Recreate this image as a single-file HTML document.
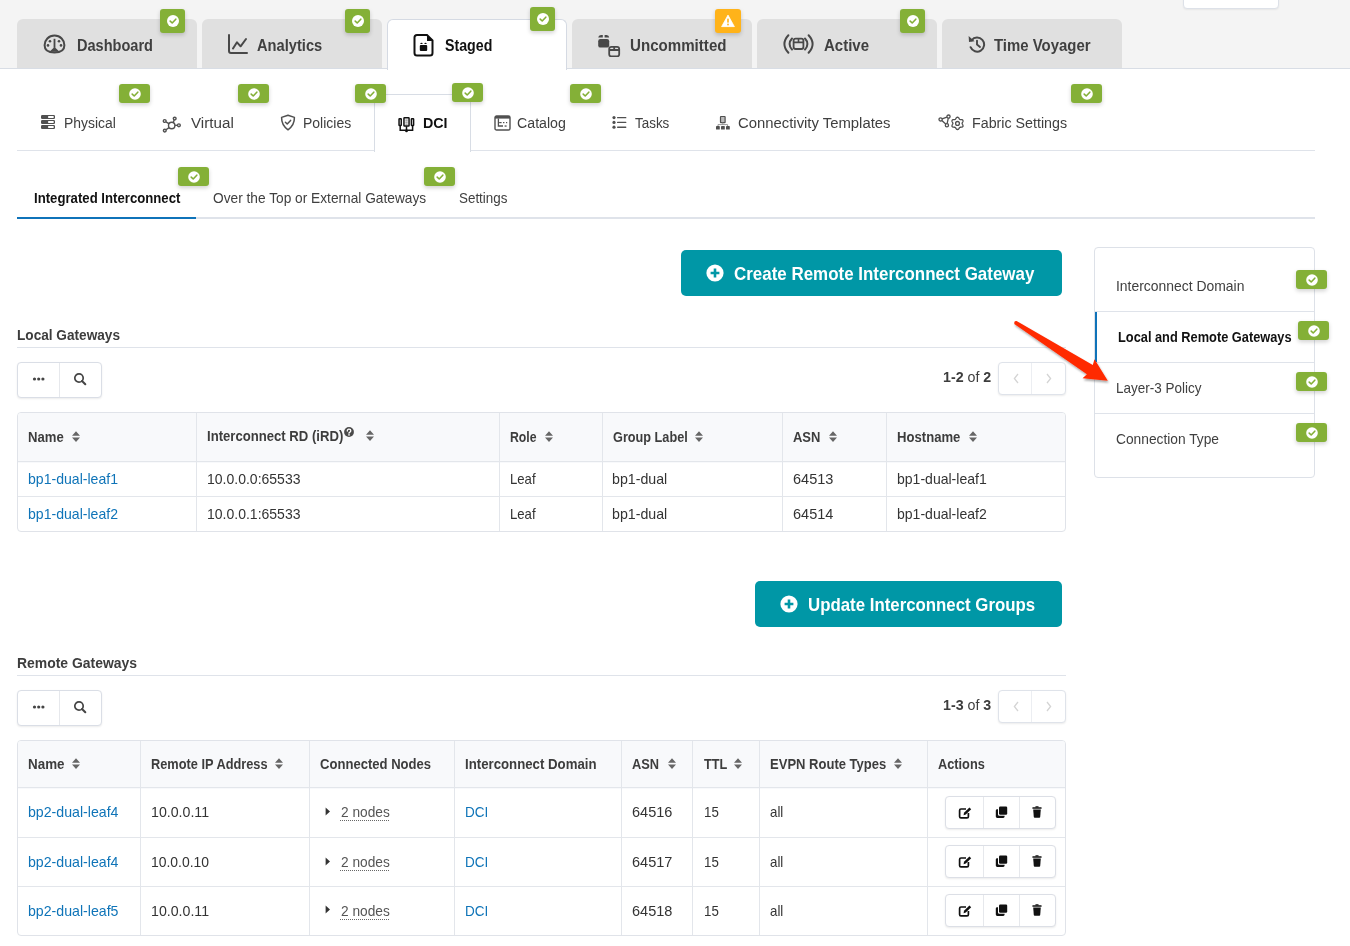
<!DOCTYPE html>
<html><head><meta charset="utf-8">
<style>
*{box-sizing:border-box;margin:0;padding:0}
html,body{width:1350px;height:946px;overflow:hidden;background:#fff;font-family:"Liberation Sans",sans-serif;position:relative}
.a{position:absolute}
.t{position:absolute;white-space:nowrap;transform-origin:0 0}
.tab{position:absolute;top:19px;width:180px;height:49px;background:#e0e0e0;border-radius:6px 6px 0 0}
.badge{position:absolute;background:#84b037;border-radius:3px;box-shadow:0 2px 4px rgba(0,0,0,.18)}
.badge svg{position:absolute;left:50%;top:50%;transform:translate(-50%,-50%)}
.ln{position:absolute;background:#dfe3ea}
.vl{position:absolute;background:#e3e6eb;width:1px}
.hl{position:absolute;background:#e3e6eb;height:1px}
.btngrp{position:absolute;border:1px solid #dadee6;border-radius:4px;background:#fff;box-shadow:0 1px 2px rgba(0,0,0,.08)}
.tbl{position:absolute;border:1px solid #e0e3e9;border-radius:4px;background:#fff;overflow:hidden}
.thead{position:absolute;left:0;top:0;right:0;background:#f8f9fb}
.teal{position:absolute;background:#0097a6;border-radius:5px}
</style></head><body>
<div class="a" style="left:0;top:0;width:1350px;height:68px;background:#f4f4f4"></div>
<div class="ln" style="left:0;top:68px;width:1350px;height:1px;background:#d8dde5"></div>
<div class="a" style="left:1183px;top:-6px;width:96px;height:15px;background:#fff;border:1px solid #dde1e8;border-radius:0 0 4px 4px;box-shadow:0 1px 2px rgba(0,0,0,.06)"></div>
<div class="tab" style="left:17px"></div>
<div class="tab" style="left:202px"></div>
<div class="tab" style="left:387px;background:#fff;border:1px solid #d5dae3;border-bottom:none;height:51px"></div>
<div class="tab" style="left:572px"></div>
<div class="tab" style="left:757px"></div>
<div class="tab" style="left:942px"></div>
<div class="badge" style="left:160px;top:9px;width:25px;height:24px"><svg width="14" height="14" viewBox="0 0 14 14"><circle cx="7" cy="7" r="6" fill="#fff"/><path d="M4.2 7.1 L6.2 9 L9.8 5.2" stroke="#84b037" stroke-width="1.6" fill="none" stroke-linecap="round" stroke-linejoin="round"/></svg></div>
<div class="badge" style="left:345px;top:9px;width:25px;height:24px"><svg width="14" height="14" viewBox="0 0 14 14"><circle cx="7" cy="7" r="6" fill="#fff"/><path d="M4.2 7.1 L6.2 9 L9.8 5.2" stroke="#84b037" stroke-width="1.6" fill="none" stroke-linecap="round" stroke-linejoin="round"/></svg></div>
<div class="badge" style="left:900px;top:9px;width:25px;height:24px"><svg width="14" height="14" viewBox="0 0 14 14"><circle cx="7" cy="7" r="6" fill="#fff"/><path d="M4.2 7.1 L6.2 9 L9.8 5.2" stroke="#84b037" stroke-width="1.6" fill="none" stroke-linecap="round" stroke-linejoin="round"/></svg></div>
<div class="badge" style="left:530px;top:7px;width:25px;height:24px"><svg width="14" height="14" viewBox="0 0 14 14"><circle cx="7" cy="7" r="6" fill="#fff"/><path d="M4.2 7.1 L6.2 9 L9.8 5.2" stroke="#84b037" stroke-width="1.6" fill="none" stroke-linecap="round" stroke-linejoin="round"/></svg></div>
<div class="badge" style="left:715px;top:9px;width:26px;height:24px;background:#ffb31a"><svg width="14" height="13" viewBox="0 0 14 13"><path d="M7 0.6 L13.4 12.2 L0.6 12.2 Z" fill="#fff" stroke="#fff" stroke-width="0.8" stroke-linejoin="round"/><rect x="6.2" y="4" width="1.6" height="4.2" rx=".6" fill="#ffb31a"/><circle cx="7" cy="10" r=".9" fill="#ffb31a"/></svg></div>
<svg class="a" style="left:43px;top:34px" width="23" height="20" viewBox="0 0 23 20">
<path d="M11.5 1.6 C5.6 1.6 1.6 6 1.6 11.2 C1.6 15.6 5 18.4 11.5 18.4 C18 18.4 21.4 15.6 21.4 11.2 C21.4 6 17.4 1.6 11.5 1.6 Z" fill="none" stroke="#484848" stroke-width="2"/>
<rect x="10.6" y="4.8" width="1.8" height="9" fill="#484848"/><path d="M6.5 17.8 L11.5 13 L16.5 17.8 Z" fill="#484848"/>
<circle cx="7" cy="7.3" r="1.3" fill="#484848"/><circle cx="16" cy="7.3" r="1.3" fill="#484848"/><circle cx="5" cy="11.4" r="1.3" fill="#484848"/><circle cx="18" cy="11.4" r="1.3" fill="#484848"/></svg>
<svg class="a" style="left:227px;top:33px" width="22" height="22" viewBox="0 0 22 22">
<path d="M2 2 V18 Q2 20 4 20 H20" fill="none" stroke="#484848" stroke-width="2" stroke-linecap="round"/>
<path d="M6 15.5 L10 9.3 L13.6 13.3 L19 6" fill="none" stroke="#484848" stroke-width="2" stroke-linecap="round" stroke-linejoin="round"/></svg>
<svg class="a" style="left:413px;top:33px" width="22" height="24" viewBox="0 0 22 24">
<path d="M4 2 H14 L19.5 7.5 V20 Q19.5 22.5 17 22.5 H4 Q1.5 22.5 1.5 20 V4.5 Q1.5 2 4 2 Z" fill="none" stroke="#111" stroke-width="2"/>
<path d="M14 2 V8 H19.5 Z" fill="#111"/>
<rect x="6.8" y="12" width="7.4" height="6" rx="1" fill="#111"/><path d="M7.2 11 Q7.8 9 9.5 10 V11 Z M13.8 11 Q13.2 9 11.5 10 V11 Z" fill="#111"/></svg>
<svg class="a" style="left:597px;top:33px" width="24" height="24" viewBox="0 0 24 24">
<rect x="1.2" y="6" width="11" height="8.6" rx="2.2" fill="#484848"/><path d="M1.2 4.6 Q1.5 2 4 2 H5.8 V4.6 Z M7.6 2 H9.6 Q12 2 12.2 4.6 H7.6 Z" fill="#484848"/>
<rect x="12.2" y="13.8" width="10" height="9.6" rx="2.2" fill="none" stroke="#484848" stroke-width="1.8"/><path d="M12.4 17 H22 M17.2 13.8 V17" stroke="#484848" stroke-width="1.8"/></svg>
<svg class="a" style="left:783px;top:33px" width="31" height="22" viewBox="0 0 31 22">
<path d="M5.4 2.2 Q1.4 6.5 1.4 11 Q1.4 15.5 5.4 19.8" fill="none" stroke="#484848" stroke-width="2" stroke-linecap="round"/>
<path d="M9 5.5 Q6.6 8 6.6 11 Q6.6 14 9 16.5" fill="none" stroke="#484848" stroke-width="2" stroke-linecap="round"/>
<path d="M25.6 2.2 Q29.6 6.5 29.6 11 Q29.6 15.5 25.6 19.8" fill="none" stroke="#484848" stroke-width="2" stroke-linecap="round"/>
<path d="M22 5.5 Q24.4 8 24.4 11 Q24.4 14 22 16.5" fill="none" stroke="#484848" stroke-width="2" stroke-linecap="round"/>
<rect x="10.6" y="5.6" width="9.8" height="10.4" rx="2" fill="none" stroke="#484848" stroke-width="1.8"/><path d="M10.8 9.4 H20.2 M15.5 5.8 V9.4" stroke="#484848" stroke-width="1.6"/></svg>
<svg class="a" style="left:966px;top:33px" width="20" height="20" viewBox="0 0 20 20">
<path d="M5.6 7.3 A7 7 0 1 1 4.6 14.2" fill="none" stroke="#484848" stroke-width="2" stroke-linecap="round"/>
<path d="M2.6 3 L3 9 L8.6 8.2 Z" fill="#484848"/><path d="M11 7.6 V11.6 L14 14" fill="none" stroke="#484848" stroke-width="1.9" stroke-linecap="round" stroke-linejoin="round"/></svg>
<div class="ln" style="left:17px;top:150px;width:1298px;height:1px"></div>
<div class="a" style="left:374px;top:94px;width:97px;height:58px;background:#fff;border:1px solid #d8dde5;border-bottom:none"></div>
<div class="badge" style="left:119px;top:84px;width:31px;height:19px"><svg width="14" height="14" viewBox="0 0 14 14"><circle cx="7" cy="7" r="5.8" fill="#fff"/><path d="M4.2 7.1 L6.2 9 L9.8 5.2" stroke="#84b037" stroke-width="1.6" fill="none" stroke-linecap="round" stroke-linejoin="round"/></svg></div>
<div class="badge" style="left:238px;top:84px;width:31px;height:19px"><svg width="14" height="14" viewBox="0 0 14 14"><circle cx="7" cy="7" r="5.8" fill="#fff"/><path d="M4.2 7.1 L6.2 9 L9.8 5.2" stroke="#84b037" stroke-width="1.6" fill="none" stroke-linecap="round" stroke-linejoin="round"/></svg></div>
<div class="badge" style="left:355px;top:84px;width:31px;height:19px"><svg width="14" height="14" viewBox="0 0 14 14"><circle cx="7" cy="7" r="5.8" fill="#fff"/><path d="M4.2 7.1 L6.2 9 L9.8 5.2" stroke="#84b037" stroke-width="1.6" fill="none" stroke-linecap="round" stroke-linejoin="round"/></svg></div>
<div class="badge" style="left:570px;top:84px;width:31px;height:19px"><svg width="14" height="14" viewBox="0 0 14 14"><circle cx="7" cy="7" r="5.8" fill="#fff"/><path d="M4.2 7.1 L6.2 9 L9.8 5.2" stroke="#84b037" stroke-width="1.6" fill="none" stroke-linecap="round" stroke-linejoin="round"/></svg></div>
<div class="badge" style="left:1071px;top:84px;width:31px;height:19px"><svg width="14" height="14" viewBox="0 0 14 14"><circle cx="7" cy="7" r="5.8" fill="#fff"/><path d="M4.2 7.1 L6.2 9 L9.8 5.2" stroke="#84b037" stroke-width="1.6" fill="none" stroke-linecap="round" stroke-linejoin="round"/></svg></div>
<div class="badge" style="left:452px;top:83px;width:31px;height:19px"><svg width="14" height="14" viewBox="0 0 14 14"><circle cx="7" cy="7" r="5.8" fill="#fff"/><path d="M4.2 7.1 L6.2 9 L9.8 5.2" stroke="#84b037" stroke-width="1.6" fill="none" stroke-linecap="round" stroke-linejoin="round"/></svg></div>
<svg class="a" style="left:40px;top:114px" width="16" height="16" viewBox="0 0 16 16">
<g fill="#505050"><rect x="1" y="1" width="14" height="4" rx="1.2"/><rect x="1" y="6" width="14" height="4" rx="1.2"/><rect x="1" y="11" width="14" height="4" rx="1.2"/></g>
<g fill="#fff"><rect x="8" y="2" width="5.8" height="2" rx=".8"/><rect x="8" y="7" width="5.8" height="2" rx=".8"/><rect x="8" y="12" width="5.8" height="2" rx=".8"/></g></svg>
<svg class="a" style="left:162px;top:116px" width="20" height="17" viewBox="0 0 20 17">
<g fill="none" stroke="#505050" stroke-width="1.4"><circle cx="9.7" cy="9.5" r="3.2"/><circle cx="2.7" cy="5" r="1.4"/><circle cx="12.7" cy="2.6" r="1.4"/><circle cx="16.9" cy="9.3" r="1.4"/><circle cx="2.8" cy="14.6" r="1.4"/>
<path d="M4 5.8 L7.2 7.8 M12.2 3.9 L11.2 6.5 M15.5 9.3 L12.9 9.4 M4 13.8 L7 11.6"/></g></svg>
<svg class="a" style="left:280px;top:114px" width="16" height="17" viewBox="0 0 16 17">
<path d="M8 1.2 L14.4 3.4 Q14.6 10.8 8 15.8 Q1.4 10.8 1.6 3.4 Z" fill="none" stroke="#505050" stroke-width="1.5" stroke-linejoin="round"/>
<path d="M5.4 8.3 L7.2 10 L10.6 6.4" fill="none" stroke="#505050" stroke-width="1.5" stroke-linecap="round" stroke-linejoin="round"/></svg>
<svg class="a" style="left:397px;top:115px" width="19" height="18" viewBox="0 0 19 18">
<g fill="none" stroke="#111" stroke-width="1.5"><rect x="2.05" y="3.8" width="2.2" height="6.6" rx=".5"/><rect x="14.4" y="3.8" width="2.2" height="6.6" rx=".5"/><rect x="6.95" y="2.75" width="5.1" height="8.3" rx=".6"/>
<path d="M3.2 10.6 V15.3 H15.6 V10.6 M9.5 11.2 V15"/></g><circle cx="9.5" cy="15.9" r="1.4" fill="#111"/>
<g fill="#777"><rect x="8.3" y="4.6" width="2.4" height="1"/><rect x="8.3" y="6.6" width="2.4" height="1"/><rect x="8.3" y="8.6" width="2.4" height="1"/></g></svg>
<svg class="a" style="left:494px;top:115px" width="17" height="16" viewBox="0 0 17 16">
<rect x="1" y="1" width="15" height="14" rx="1.6" fill="none" stroke="#505050" stroke-width="1.4"/><rect x="1" y="1" width="15" height="2.6" fill="#505050"/>
<path d="M4.4 3.4 V11 H9" fill="none" stroke="#505050" stroke-width="1.3"/><g fill="#505050"><rect x="5.2" y="7" width="2.4" height="1.2"/><rect x="9" y="7" width="1.4" height="1.2"/><rect x="12" y="7" width="1.2" height="1.2"/><rect x="10.6" y="10.4" width="2" height="1.3"/></g></svg>
<svg class="a" style="left:612px;top:115px" width="15" height="15" viewBox="0 0 15 15">
<g fill="#505050"><circle cx="2" cy="2.6" r="1.6"/><circle cx="2" cy="7.4" r="1.6"/><circle cx="2" cy="12.2" r="1.6"/><rect x="5" y="2" width="9.4" height="1.3" rx=".6"/><rect x="5" y="6.8" width="9.4" height="1.3" rx=".6"/><rect x="5" y="11.6" width="9.4" height="1.3" rx=".6"/></g></svg>
<svg class="a" style="left:715px;top:115px" width="16" height="16" viewBox="0 0 16 16">
<rect x="5.5" y="1.5" width="4.6" height="6.1" rx=".4" fill="#bbb" stroke="#505050" stroke-width="1.2"/><path d="M7.8 7.6 V10 M3 11.2 V9.6 H12.6 V11.2" fill="none" stroke="#999" stroke-width="1"/>
<g fill="#505050"><rect x="1" y="11" width="3.8" height="3.6" rx=".4"/><rect x="6" y="11" width="3.8" height="3.6" rx=".4"/><rect x="11" y="11" width="3.8" height="3.6" rx=".4"/></g></svg>
<svg class="a" style="left:938px;top:114px" width="26" height="18" viewBox="0 0 26 18">
<g fill="none" stroke="#505050" stroke-width="1.3"><circle cx="2.6" cy="5.4" r="1.6"/><circle cx="10.5" cy="2.6" r="1.6"/><circle cx="8.9" cy="11.2" r="1.6"/><path d="M4.1 4.9 L8.9 3.2 M10.3 4.2 L9.1 9.6 M3.8 6.5 L7.7 10.1"/>
<path d="M19.50 3.20 L20.03 3.33 L20.51 3.69 L20.90 4.18 L21.21 4.70 L21.49 5.13 L21.80 5.42 L22.20 5.54 L22.71 5.57 L23.32 5.58 L23.94 5.67 L24.49 5.91 L24.87 6.30 L25.02 6.83 L24.95 7.42 L24.72 8.00 L24.42 8.53 L24.19 8.99 L24.10 9.40 L24.19 9.81 L24.42 10.27 L24.72 10.80 L24.95 11.38 L25.02 11.97 L24.87 12.50 L24.49 12.89 L23.94 13.13 L23.32 13.22 L22.71 13.23 L22.20 13.26 L21.80 13.38 L21.49 13.67 L21.21 14.10 L20.90 14.62 L20.51 15.11 L20.03 15.47 L19.50 15.60 L18.97 15.47 L18.49 15.11 L18.10 14.62 L17.79 14.10 L17.51 13.67 L17.20 13.38 L16.80 13.26 L16.29 13.23 L15.68 13.22 L15.06 13.13 L14.51 12.89 L14.13 12.50 L13.98 11.97 L14.05 11.38 L14.28 10.80 L14.58 10.27 L14.81 9.81 L14.90 9.40 L14.81 8.99 L14.58 8.53 L14.28 8.00 L14.05 7.42 L13.98 6.83 L14.13 6.30 L14.51 5.91 L15.06 5.67 L15.68 5.58 L16.29 5.57 L16.80 5.54 L17.20 5.42 L17.51 5.13 L17.79 4.70 L18.10 4.18 L18.49 3.69 L18.97 3.33 L19.50 3.20 Z" stroke-linejoin="round"/><circle cx="19.5" cy="9.4" r="1.9"/></g></svg>
<div class="ln" style="left:17px;top:217px;width:1298px;height:2px"></div>
<div class="a" style="left:17px;top:217px;width:179px;height:2px;background:#0f73b9"></div>
<div class="badge" style="left:178px;top:167px;width:31px;height:19px"><svg width="14" height="14" viewBox="0 0 14 14"><circle cx="7" cy="7" r="5.8" fill="#fff"/><path d="M4.2 7.1 L6.2 9 L9.8 5.2" stroke="#84b037" stroke-width="1.6" fill="none" stroke-linecap="round" stroke-linejoin="round"/></svg></div>
<div class="badge" style="left:424px;top:167px;width:31px;height:19px"><svg width="14" height="14" viewBox="0 0 14 14"><circle cx="7" cy="7" r="5.8" fill="#fff"/><path d="M4.2 7.1 L6.2 9 L9.8 5.2" stroke="#84b037" stroke-width="1.6" fill="none" stroke-linecap="round" stroke-linejoin="round"/></svg></div>
<div class="teal" style="left:681px;top:250px;width:381px;height:46px"></div>
<svg class="a" style="left:706px;top:264px" width="18" height="18" viewBox="0 0 18 18"><circle cx="9" cy="9" r="8.6" fill="#fff"/><path d="M9 4.6 V13.4 M4.6 9 H13.4" stroke="#0097a6" stroke-width="2.6"/></svg>
<div class="teal" style="left:755px;top:581px;width:307px;height:46px"></div>
<svg class="a" style="left:780px;top:595px" width="18" height="18" viewBox="0 0 18 18"><circle cx="9" cy="9" r="8.6" fill="#fff"/><path d="M9 4.6 V13.4 M4.6 9 H13.4" stroke="#0097a6" stroke-width="2.6"/></svg>
<div class="a" style="left:1094px;top:247px;width:221px;height:231px;border:1px solid #dde1e8;border-radius:4px;background:#fff"></div>
<div class="ln" style="left:1095px;top:311px;width:219px;height:1px"></div>
<div class="ln" style="left:1095px;top:362px;width:219px;height:1px"></div>
<div class="ln" style="left:1095px;top:413px;width:219px;height:1px"></div>
<div class="a" style="left:1095px;top:312px;width:2px;height:50px;background:#0f73b9"></div>
<div class="badge" style="left:1296px;top:270px;width:31px;height:19px"><svg width="14" height="14" viewBox="0 0 14 14"><circle cx="7" cy="7" r="5.8" fill="#fff"/><path d="M4.2 7.1 L6.2 9 L9.8 5.2" stroke="#84b037" stroke-width="1.6" fill="none" stroke-linecap="round" stroke-linejoin="round"/></svg></div>
<div class="badge" style="left:1298px;top:321px;width:31px;height:19px"><svg width="14" height="14" viewBox="0 0 14 14"><circle cx="7" cy="7" r="5.8" fill="#fff"/><path d="M4.2 7.1 L6.2 9 L9.8 5.2" stroke="#84b037" stroke-width="1.6" fill="none" stroke-linecap="round" stroke-linejoin="round"/></svg></div>
<div class="badge" style="left:1296px;top:372px;width:31px;height:19px"><svg width="14" height="14" viewBox="0 0 14 14"><circle cx="7" cy="7" r="5.8" fill="#fff"/><path d="M4.2 7.1 L6.2 9 L9.8 5.2" stroke="#84b037" stroke-width="1.6" fill="none" stroke-linecap="round" stroke-linejoin="round"/></svg></div>
<div class="badge" style="left:1296px;top:423px;width:31px;height:19px"><svg width="14" height="14" viewBox="0 0 14 14"><circle cx="7" cy="7" r="5.8" fill="#fff"/><path d="M4.2 7.1 L6.2 9 L9.8 5.2" stroke="#84b037" stroke-width="1.6" fill="none" stroke-linecap="round" stroke-linejoin="round"/></svg></div>
<div class="ln" style="left:17px;top:347px;width:1049px;height:1px"></div>
<div class="btngrp" style="left:17px;top:362px;width:85px;height:36px"></div>
<div class="a" style="left:59px;top:363px;width:1px;height:34px;background:#e6e8ec"></div>
<svg class="a" style="left:32px;top:376px" width="14" height="6" viewBox="0 0 14 6"><g fill="#444"><circle cx="2.5" cy="3" r="1.6"/><circle cx="6.7" cy="3" r="1.6"/><circle cx="10.9" cy="3" r="1.6"/></g></svg>
<svg class="a" style="left:73px;top:372px" width="14" height="14" viewBox="0 0 14 14"><circle cx="6" cy="6" r="4.2" fill="none" stroke="#444" stroke-width="1.7"/><path d="M9 9 L12.3 12.3" stroke="#444" stroke-width="2" stroke-linecap="round"/></svg>
<div class="btngrp" style="left:998px;top:362px;width:68px;height:33px;border-color:#dfe3ea"></div>
<div class="a" style="left:1031px;top:363px;width:1px;height:31px;background:#eceef2"></div>
<svg class="a" style="left:1012px;top:373px" width="8" height="11" viewBox="0 0 8 11"><path d="M6 1 L2.4 5.5 L6 10" fill="none" stroke="#d4d4d4" stroke-width="1.3"/></svg>
<svg class="a" style="left:1045px;top:373px" width="8" height="11" viewBox="0 0 8 11"><path d="M2 1 L5.6 5.5 L2 10" fill="none" stroke="#d4d4d4" stroke-width="1.3"/></svg>
<div class="ln" style="left:17px;top:675px;width:1049px;height:1px"></div>
<div class="btngrp" style="left:17px;top:690px;width:85px;height:36px"></div>
<div class="a" style="left:59px;top:691px;width:1px;height:34px;background:#e6e8ec"></div>
<svg class="a" style="left:32px;top:704px" width="14" height="6" viewBox="0 0 14 6"><g fill="#444"><circle cx="2.5" cy="3" r="1.6"/><circle cx="6.7" cy="3" r="1.6"/><circle cx="10.9" cy="3" r="1.6"/></g></svg>
<svg class="a" style="left:73px;top:700px" width="14" height="14" viewBox="0 0 14 14"><circle cx="6" cy="6" r="4.2" fill="none" stroke="#444" stroke-width="1.7"/><path d="M9 9 L12.3 12.3" stroke="#444" stroke-width="2" stroke-linecap="round"/></svg>
<div class="btngrp" style="left:998px;top:690px;width:68px;height:33px;border-color:#dfe3ea"></div>
<div class="a" style="left:1031px;top:691px;width:1px;height:31px;background:#eceef2"></div>
<svg class="a" style="left:1012px;top:701px" width="8" height="11" viewBox="0 0 8 11"><path d="M6 1 L2.4 5.5 L6 10" fill="none" stroke="#d4d4d4" stroke-width="1.3"/></svg>
<svg class="a" style="left:1045px;top:701px" width="8" height="11" viewBox="0 0 8 11"><path d="M2 1 L5.6 5.5 L2 10" fill="none" stroke="#d4d4d4" stroke-width="1.3"/></svg>
<div class="tbl" style="left:17px;top:412px;width:1049px;height:120px"><div class="thead" style="height:50px"></div></div>
<div class="hl" style="left:18px;top:461px;width:1047px"></div>
<div class="hl" style="left:18px;top:496px;width:1047px"></div>
<div class="vl" style="left:196px;top:413px;height:118px"></div>
<div class="vl" style="left:499px;top:413px;height:118px"></div>
<div class="vl" style="left:602px;top:413px;height:118px"></div>
<div class="vl" style="left:782px;top:413px;height:118px"></div>
<div class="vl" style="left:886px;top:413px;height:118px"></div>
<svg class="a" style="left:72px;top:431px" width="8" height="11" viewBox="0 0 8 11"><path d="M4 0.2 L8 4.8 H0 Z M0 6.4 H8 L4 11 Z" fill="#666"/></svg>
<svg class="a" style="left:545px;top:431px" width="8" height="11" viewBox="0 0 8 11"><path d="M4 0.2 L8 4.8 H0 Z M0 6.4 H8 L4 11 Z" fill="#666"/></svg>
<svg class="a" style="left:695px;top:431px" width="8" height="11" viewBox="0 0 8 11"><path d="M4 0.2 L8 4.8 H0 Z M0 6.4 H8 L4 11 Z" fill="#666"/></svg>
<svg class="a" style="left:829px;top:431px" width="8" height="11" viewBox="0 0 8 11"><path d="M4 0.2 L8 4.8 H0 Z M0 6.4 H8 L4 11 Z" fill="#666"/></svg>
<svg class="a" style="left:969px;top:431px" width="8" height="11" viewBox="0 0 8 11"><path d="M4 0.2 L8 4.8 H0 Z M0 6.4 H8 L4 11 Z" fill="#666"/></svg>
<svg class="a" style="left:366px;top:430px" width="8" height="11" viewBox="0 0 8 11"><path d="M4 0.2 L8 4.8 H0 Z M0 6.4 H8 L4 11 Z" fill="#666"/></svg>
<svg class="a" style="left:344px;top:427px" width="10" height="10" viewBox="0 0 10 10"><circle cx="5" cy="5" r="4.9" fill="#4a4a4a"/><path d="M3.3 4 Q3.3 2.2 5 2.2 Q6.8 2.2 6.8 3.8 Q6.8 4.8 5.6 5.3 Q5 5.6 5 6.2" fill="none" stroke="#fff" stroke-width="1.3" stroke-linecap="round"/><circle cx="5" cy="7.9" r=".8" fill="#fff"/></svg>
<div class="tbl" style="left:17px;top:740px;width:1049px;height:196px"><div class="thead" style="height:48px"></div></div>
<div class="hl" style="left:18px;top:787px;width:1047px"></div>
<div class="hl" style="left:18px;top:837px;width:1047px"></div>
<div class="hl" style="left:18px;top:886px;width:1047px"></div>
<div class="vl" style="left:140px;top:741px;height:194px"></div>
<div class="vl" style="left:309px;top:741px;height:194px"></div>
<div class="vl" style="left:454px;top:741px;height:194px"></div>
<div class="vl" style="left:621px;top:741px;height:194px"></div>
<div class="vl" style="left:692px;top:741px;height:194px"></div>
<div class="vl" style="left:759px;top:741px;height:194px"></div>
<div class="vl" style="left:927px;top:741px;height:194px"></div>
<svg class="a" style="left:72px;top:758px" width="8" height="11" viewBox="0 0 8 11"><path d="M4 0.2 L8 4.8 H0 Z M0 6.4 H8 L4 11 Z" fill="#666"/></svg>
<svg class="a" style="left:275px;top:758px" width="8" height="11" viewBox="0 0 8 11"><path d="M4 0.2 L8 4.8 H0 Z M0 6.4 H8 L4 11 Z" fill="#666"/></svg>
<svg class="a" style="left:668px;top:758px" width="8" height="11" viewBox="0 0 8 11"><path d="M4 0.2 L8 4.8 H0 Z M0 6.4 H8 L4 11 Z" fill="#666"/></svg>
<svg class="a" style="left:734px;top:758px" width="8" height="11" viewBox="0 0 8 11"><path d="M4 0.2 L8 4.8 H0 Z M0 6.4 H8 L4 11 Z" fill="#666"/></svg>
<svg class="a" style="left:894px;top:758px" width="8" height="11" viewBox="0 0 8 11"><path d="M4 0.2 L8 4.8 H0 Z M0 6.4 H8 L4 11 Z" fill="#666"/></svg>
<div class="btngrp" style="left:945px;top:796px;width:111px;height:33px;border-color:#dcdfe6"></div>
<div class="a" style="left:983px;top:797px;width:1px;height:31px;background:#e6e8ec"></div>
<div class="a" style="left:1019px;top:797px;width:1px;height:31px;background:#e6e8ec"></div>
<svg class="a" style="left:958px;top:806px" width="14" height="13" viewBox="0 0 14 13"><path d="M8 3 H3 Q1.6 3 1.6 4.4 V10.4 Q1.6 11.8 3 11.8 H9 Q10.4 11.8 10.4 10.4 V7" fill="none" stroke="#111" stroke-width="1.7"/><path d="M5.6 9.2 L6 6.8 L11.4 1.4 L13.2 3.2 L7.8 8.6 Z" fill="#111"/></svg>
<svg class="a" style="left:995px;top:806px" width="13" height="13" viewBox="0 0 13 13"><rect x="4" y="0.6" width="8.2" height="8.2" rx="1.2" fill="#111"/><path d="M3 3.2 H2.2 Q0.8 3.2 0.8 4.6 V10.6 Q0.8 12 2.2 12 H8.2 Q9.6 12 9.6 10.6 V9.8 H4.4 Q3 9.8 3 8.4 Z" fill="#111"/></svg>
<svg class="a" style="left:1032px;top:806px" width="10" height="12" viewBox="0 0 10 12"><rect x="0.4" y="1.2" width="9.2" height="1.6" rx=".4" fill="#111"/><rect x="3.4" y="0.2" width="3.2" height="1.4" rx=".4" fill="#111"/><path d="M1.2 3.4 H8.8 L8.2 11 Q8.1 11.8 7.3 11.8 H2.7 Q1.9 11.8 1.8 11 Z" fill="#111"/></svg>
<div class="btngrp" style="left:945px;top:845px;width:111px;height:33px;border-color:#dcdfe6"></div>
<div class="a" style="left:983px;top:846px;width:1px;height:31px;background:#e6e8ec"></div>
<div class="a" style="left:1019px;top:846px;width:1px;height:31px;background:#e6e8ec"></div>
<svg class="a" style="left:958px;top:855px" width="14" height="13" viewBox="0 0 14 13"><path d="M8 3 H3 Q1.6 3 1.6 4.4 V10.4 Q1.6 11.8 3 11.8 H9 Q10.4 11.8 10.4 10.4 V7" fill="none" stroke="#111" stroke-width="1.7"/><path d="M5.6 9.2 L6 6.8 L11.4 1.4 L13.2 3.2 L7.8 8.6 Z" fill="#111"/></svg>
<svg class="a" style="left:995px;top:855px" width="13" height="13" viewBox="0 0 13 13"><rect x="4" y="0.6" width="8.2" height="8.2" rx="1.2" fill="#111"/><path d="M3 3.2 H2.2 Q0.8 3.2 0.8 4.6 V10.6 Q0.8 12 2.2 12 H8.2 Q9.6 12 9.6 10.6 V9.8 H4.4 Q3 9.8 3 8.4 Z" fill="#111"/></svg>
<svg class="a" style="left:1032px;top:855px" width="10" height="12" viewBox="0 0 10 12"><rect x="0.4" y="1.2" width="9.2" height="1.6" rx=".4" fill="#111"/><rect x="3.4" y="0.2" width="3.2" height="1.4" rx=".4" fill="#111"/><path d="M1.2 3.4 H8.8 L8.2 11 Q8.1 11.8 7.3 11.8 H2.7 Q1.9 11.8 1.8 11 Z" fill="#111"/></svg>
<div class="btngrp" style="left:945px;top:894px;width:111px;height:33px;border-color:#dcdfe6"></div>
<div class="a" style="left:983px;top:895px;width:1px;height:31px;background:#e6e8ec"></div>
<div class="a" style="left:1019px;top:895px;width:1px;height:31px;background:#e6e8ec"></div>
<svg class="a" style="left:958px;top:904px" width="14" height="13" viewBox="0 0 14 13"><path d="M8 3 H3 Q1.6 3 1.6 4.4 V10.4 Q1.6 11.8 3 11.8 H9 Q10.4 11.8 10.4 10.4 V7" fill="none" stroke="#111" stroke-width="1.7"/><path d="M5.6 9.2 L6 6.8 L11.4 1.4 L13.2 3.2 L7.8 8.6 Z" fill="#111"/></svg>
<svg class="a" style="left:995px;top:904px" width="13" height="13" viewBox="0 0 13 13"><rect x="4" y="0.6" width="8.2" height="8.2" rx="1.2" fill="#111"/><path d="M3 3.2 H2.2 Q0.8 3.2 0.8 4.6 V10.6 Q0.8 12 2.2 12 H8.2 Q9.6 12 9.6 10.6 V9.8 H4.4 Q3 9.8 3 8.4 Z" fill="#111"/></svg>
<svg class="a" style="left:1032px;top:904px" width="10" height="12" viewBox="0 0 10 12"><rect x="0.4" y="1.2" width="9.2" height="1.6" rx=".4" fill="#111"/><rect x="3.4" y="0.2" width="3.2" height="1.4" rx=".4" fill="#111"/><path d="M1.2 3.4 H8.8 L8.2 11 Q8.1 11.8 7.3 11.8 H2.7 Q1.9 11.8 1.8 11 Z" fill="#111"/></svg>
<svg class="a" style="left:325px;top:806.8px" width="6" height="9" viewBox="0 0 6 9"><path d="M0.6 0.4 L5 4.5 L0.6 8.6 Z" fill="#333"/></svg>
<div class="a" style="left:340px;top:820.3px;width:49px;height:0;border-top:1px dotted #666"></div>
<svg class="a" style="left:325px;top:856.6px" width="6" height="9" viewBox="0 0 6 9"><path d="M0.6 0.4 L5 4.5 L0.6 8.6 Z" fill="#333"/></svg>
<div class="a" style="left:340px;top:870.1px;width:49px;height:0;border-top:1px dotted #666"></div>
<svg class="a" style="left:325px;top:905.4px" width="6" height="9" viewBox="0 0 6 9"><path d="M0.6 0.4 L5 4.5 L0.6 8.6 Z" fill="#333"/></svg>
<div class="a" style="left:340px;top:918.9px;width:49px;height:0;border-top:1px dotted #666"></div>
<svg class="a" style="left:1000px;top:310px;overflow:visible" width="120" height="80" viewBox="0 0 120 80">
<defs><filter id="sh" x="-20%" y="-20%" width="140%" height="160%"><feGaussianBlur in="SourceAlpha" stdDeviation="1.2"/><feOffset dx="1" dy="2"/><feComponentTransfer><feFuncA type="linear" slope="0.35"/></feComponentTransfer><feMerge><feMergeNode/><feMergeNode in="SourceGraphic"/></feMerge></filter></defs>
<path filter="url(#sh)" d="M14.2 13 Q14.2 10.6 16.6 11.1 L92.8 55 L94.5 49.3 L107.8 70.7 L82.6 68.3 L86.9 64.3 L15.4 14.8 Q14.2 14.4 14.2 13 Z" fill="#ff2a00"/></svg>
<div class="t " style="left:76.6px;top:34.78px;font-size:16.5px;line-height:21px;font-weight:700;color:#404040;transform:scaleX(0.8818)">Dashboard</div>
<div class="t " style="left:257.4px;top:34.78px;font-size:16.5px;line-height:21px;font-weight:700;color:#404040;transform:scaleX(0.8886)">Analytics</div>
<div class="t " style="left:630.0px;top:34.78px;font-size:16.5px;line-height:21px;font-weight:700;color:#404040;transform:scaleX(0.9154)">Uncommitted</div>
<div class="t " style="left:823.7px;top:34.78px;font-size:16.5px;line-height:21px;font-weight:700;color:#404040;transform:scaleX(0.9085)">Active</div>
<div class="t " style="left:994.4px;top:34.78px;font-size:16.5px;line-height:21px;font-weight:700;color:#404040;transform:scaleX(0.9054)">Time Voyager</div>
<div class="t " style="left:445.0px;top:34.78px;font-size:16.5px;line-height:21px;font-weight:700;color:#111;transform:scaleX(0.8616)">Staged</div>
<div class="t " style="left:63.5px;top:112.63px;font-size:15.5px;line-height:20px;font-weight:400;color:#404040;transform:scaleX(0.8975)">Physical</div>
<div class="t " style="left:190.6px;top:112.63px;font-size:15.5px;line-height:20px;font-weight:400;color:#404040;transform:scaleX(0.9804)">Virtual</div>
<div class="t " style="left:302.8px;top:112.63px;font-size:15.5px;line-height:20px;font-weight:400;color:#404040;transform:scaleX(0.9023)">Policies</div>
<div class="t " style="left:516.8px;top:112.63px;font-size:15.5px;line-height:20px;font-weight:400;color:#404040;transform:scaleX(0.9151)">Catalog</div>
<div class="t " style="left:635.0px;top:112.63px;font-size:15.5px;line-height:20px;font-weight:400;color:#404040;transform:scaleX(0.8656)">Tasks</div>
<div class="t " style="left:738.0px;top:112.63px;font-size:15.5px;line-height:20px;font-weight:400;color:#404040;transform:scaleX(0.9585)">Connectivity Templates</div>
<div class="t " style="left:971.7px;top:112.63px;font-size:15.5px;line-height:20px;font-weight:400;color:#404040;transform:scaleX(0.9198)">Fabric Settings</div>
<div class="t " style="left:423.0px;top:112.63px;font-size:15.5px;line-height:20px;font-weight:700;color:#111;transform:scaleX(0.9212)">DCI</div>
<div class="t " style="left:33.6px;top:189.47px;font-size:14.5px;line-height:19px;font-weight:700;color:#111;transform:scaleX(0.9085)">Integrated Interconnect</div>
<div class="t " style="left:212.5px;top:189.47px;font-size:14.5px;line-height:19px;font-weight:400;color:#404040;transform:scaleX(0.9458)">Over the Top or External Gateways</div>
<div class="t " style="left:458.6px;top:189.47px;font-size:14.5px;line-height:19px;font-weight:400;color:#404040;transform:scaleX(0.9236)">Settings</div>
<div class="t " style="left:733.8px;top:261.71px;font-size:19px;line-height:24px;font-weight:700;color:#fff;transform:scaleX(0.8918)">Create Remote Interconnect Gateway</div>
<div class="t " style="left:807.5px;top:593.01px;font-size:19px;line-height:24px;font-weight:700;color:#fff;transform:scaleX(0.8857)">Update Interconnect Groups</div>
<div class="t " style="left:1116.0px;top:277.47px;font-size:14.5px;line-height:19px;font-weight:400;color:#404040;transform:scaleX(0.9597)">Interconnect Domain</div>
<div class="t " style="left:1118.0px;top:328.47px;font-size:14.5px;line-height:19px;font-weight:700;color:#111;transform:scaleX(0.8829)">Local and Remote Gateways</div>
<div class="t " style="left:1116.0px;top:379.47px;font-size:14.5px;line-height:19px;font-weight:400;color:#404040;transform:scaleX(0.9295)">Layer-3 Policy</div>
<div class="t " style="left:1116.0px;top:430.47px;font-size:14.5px;line-height:19px;font-weight:400;color:#404040;transform:scaleX(0.9488)">Connection Type</div>
<div class="t " style="left:17.4px;top:325.64px;font-size:14.3px;line-height:18px;font-weight:700;color:#3d3d3d;transform:scaleX(0.9530)">Local Gateways</div>
<div class="t " style="left:17.4px;top:653.84px;font-size:14.3px;line-height:18px;font-weight:700;color:#3d3d3d;transform:scaleX(0.9742)">Remote Gateways</div>
<div class="t " style="left:942.9px;top:368.07px;font-size:14.5px;line-height:19px;font-weight:400;color:#3d3d3d;transform:scaleX(0.9816)"><b>1-2</b> of <b>2</b></div>
<div class="t " style="left:942.9px;top:696.07px;font-size:14.5px;line-height:19px;font-weight:400;color:#3d3d3d;transform:scaleX(0.9816)"><b>1-3</b> of <b>3</b></div>
<div class="t " style="left:28.0px;top:428.37px;font-size:14.8px;line-height:19px;font-weight:700;color:#3d3d3d;transform:scaleX(0.8856)">Name</div>
<div class="t " style="left:510.4px;top:428.37px;font-size:14.8px;line-height:19px;font-weight:700;color:#3d3d3d;transform:scaleX(0.8292)">Role</div>
<div class="t " style="left:613.0px;top:428.37px;font-size:14.8px;line-height:19px;font-weight:700;color:#3d3d3d;transform:scaleX(0.8582)">Group Label</div>
<div class="t " style="left:793.3px;top:428.37px;font-size:14.8px;line-height:19px;font-weight:700;color:#3d3d3d;transform:scaleX(0.8768)">ASN</div>
<div class="t " style="left:897.3px;top:428.37px;font-size:14.8px;line-height:19px;font-weight:700;color:#3d3d3d;transform:scaleX(0.8861)">Hostname</div>
<div class="t " style="left:206.5px;top:426.97px;font-size:14.8px;line-height:19px;font-weight:700;color:#3d3d3d;transform:scaleX(0.8866)">Interconnect RD (iRD)</div>
<div class="t " style="left:28.0px;top:470.27px;font-size:14.5px;line-height:19px;font-weight:400;color:#0f74b8;transform:scaleX(0.9707)">bp1-dual-leaf1</div>
<div class="t " style="left:206.5px;top:470.27px;font-size:14.5px;line-height:19px;font-weight:400;color:#333;transform:scaleX(0.9663)">10.0.0.0:65533</div>
<div class="t " style="left:510.4px;top:470.27px;font-size:14.5px;line-height:19px;font-weight:400;color:#333;transform:scaleX(0.9067)">Leaf</div>
<div class="t " style="left:612.4px;top:470.27px;font-size:14.5px;line-height:19px;font-weight:400;color:#333;transform:scaleX(0.9781)">bp1-dual</div>
<div class="t " style="left:792.9px;top:470.27px;font-size:14.5px;line-height:19px;font-weight:400;color:#333;transform:scaleX(1.0018)">64513</div>
<div class="t " style="left:897.3px;top:470.27px;font-size:14.5px;line-height:19px;font-weight:400;color:#333;transform:scaleX(0.9674)">bp1-dual-leaf1</div>
<div class="t " style="left:28.0px;top:505.27px;font-size:14.5px;line-height:19px;font-weight:400;color:#0f74b8;transform:scaleX(0.9707)">bp1-dual-leaf2</div>
<div class="t " style="left:206.5px;top:505.27px;font-size:14.5px;line-height:19px;font-weight:400;color:#333;transform:scaleX(0.9663)">10.0.0.1:65533</div>
<div class="t " style="left:510.4px;top:505.27px;font-size:14.5px;line-height:19px;font-weight:400;color:#333;transform:scaleX(0.9067)">Leaf</div>
<div class="t " style="left:612.4px;top:505.27px;font-size:14.5px;line-height:19px;font-weight:400;color:#333;transform:scaleX(0.9781)">bp1-dual</div>
<div class="t " style="left:792.9px;top:505.27px;font-size:14.5px;line-height:19px;font-weight:400;color:#333;transform:scaleX(1.0018)">64514</div>
<div class="t " style="left:897.3px;top:505.27px;font-size:14.5px;line-height:19px;font-weight:400;color:#333;transform:scaleX(0.9674)">bp1-dual-leaf2</div>
<div class="t " style="left:27.9px;top:755.37px;font-size:14.8px;line-height:19px;font-weight:700;color:#3d3d3d;transform:scaleX(0.9054)">Name</div>
<div class="t " style="left:150.8px;top:755.37px;font-size:14.8px;line-height:19px;font-weight:700;color:#3d3d3d;transform:scaleX(0.8645)">Remote IP Address</div>
<div class="t " style="left:319.6px;top:755.37px;font-size:14.8px;line-height:19px;font-weight:700;color:#3d3d3d;transform:scaleX(0.8832)">Connected Nodes</div>
<div class="t " style="left:464.8px;top:755.37px;font-size:14.8px;line-height:19px;font-weight:700;color:#3d3d3d;transform:scaleX(0.8935)">Interconnect Domain</div>
<div class="t " style="left:632.2px;top:755.37px;font-size:14.8px;line-height:19px;font-weight:700;color:#3d3d3d;transform:scaleX(0.8672)">ASN</div>
<div class="t " style="left:703.7px;top:755.37px;font-size:14.8px;line-height:19px;font-weight:700;color:#3d3d3d;transform:scaleX(0.8590)">TTL</div>
<div class="t " style="left:770.0px;top:755.37px;font-size:14.8px;line-height:19px;font-weight:700;color:#3d3d3d;transform:scaleX(0.8803)">EVPN Route Types</div>
<div class="t " style="left:938.4px;top:755.37px;font-size:14.8px;line-height:19px;font-weight:700;color:#3d3d3d;transform:scaleX(0.8624)">Actions</div>
<div class="t " style="left:27.9px;top:803.07px;font-size:14.5px;line-height:19px;font-weight:400;color:#0f74b8;transform:scaleX(0.9761)">bp2-dual-leaf4</div>
<div class="t " style="left:150.8px;top:803.07px;font-size:14.5px;line-height:19px;font-weight:400;color:#333;transform:scaleX(0.9780)">10.0.0.11</div>
<div class="t " style="left:340.5px;top:803.07px;font-size:14.5px;line-height:19px;font-weight:400;color:#555;transform:scaleX(0.9456)">2 nodes</div>
<div class="t " style="left:464.8px;top:803.07px;font-size:14.5px;line-height:19px;font-weight:400;color:#0f74b8;transform:scaleX(0.9326)">DCI</div>
<div class="t " style="left:632.2px;top:803.07px;font-size:14.5px;line-height:19px;font-weight:400;color:#333;transform:scaleX(1.0018)">64516</div>
<div class="t " style="left:703.7px;top:803.07px;font-size:14.5px;line-height:19px;font-weight:400;color:#333;transform:scaleX(0.9169)">15</div>
<div class="t " style="left:770.0px;top:803.07px;font-size:14.5px;line-height:19px;font-weight:400;color:#333;transform:scaleX(0.9163)">all</div>
<div class="t " style="left:27.9px;top:852.87px;font-size:14.5px;line-height:19px;font-weight:400;color:#0f74b8;transform:scaleX(0.9761)">bp2-dual-leaf4</div>
<div class="t " style="left:150.8px;top:852.87px;font-size:14.5px;line-height:19px;font-weight:400;color:#333;transform:scaleX(0.9606)">10.0.0.10</div>
<div class="t " style="left:340.5px;top:852.87px;font-size:14.5px;line-height:19px;font-weight:400;color:#555;transform:scaleX(0.9456)">2 nodes</div>
<div class="t " style="left:464.8px;top:852.87px;font-size:14.5px;line-height:19px;font-weight:400;color:#0f74b8;transform:scaleX(0.9326)">DCI</div>
<div class="t " style="left:632.2px;top:852.87px;font-size:14.5px;line-height:19px;font-weight:400;color:#333;transform:scaleX(1.0018)">64517</div>
<div class="t " style="left:703.7px;top:852.87px;font-size:14.5px;line-height:19px;font-weight:400;color:#333;transform:scaleX(0.9169)">15</div>
<div class="t " style="left:770.0px;top:852.87px;font-size:14.5px;line-height:19px;font-weight:400;color:#333;transform:scaleX(0.9163)">all</div>
<div class="t " style="left:27.9px;top:901.67px;font-size:14.5px;line-height:19px;font-weight:400;color:#0f74b8;transform:scaleX(0.9761)">bp2-dual-leaf5</div>
<div class="t " style="left:150.8px;top:901.67px;font-size:14.5px;line-height:19px;font-weight:400;color:#333;transform:scaleX(0.9780)">10.0.0.11</div>
<div class="t " style="left:340.5px;top:901.67px;font-size:14.5px;line-height:19px;font-weight:400;color:#555;transform:scaleX(0.9456)">2 nodes</div>
<div class="t " style="left:464.8px;top:901.67px;font-size:14.5px;line-height:19px;font-weight:400;color:#0f74b8;transform:scaleX(0.9326)">DCI</div>
<div class="t " style="left:632.2px;top:901.67px;font-size:14.5px;line-height:19px;font-weight:400;color:#333;transform:scaleX(1.0018)">64518</div>
<div class="t " style="left:703.7px;top:901.67px;font-size:14.5px;line-height:19px;font-weight:400;color:#333;transform:scaleX(0.9169)">15</div>
<div class="t " style="left:770.0px;top:901.67px;font-size:14.5px;line-height:19px;font-weight:400;color:#333;transform:scaleX(0.9163)">all</div>
</body></html>
